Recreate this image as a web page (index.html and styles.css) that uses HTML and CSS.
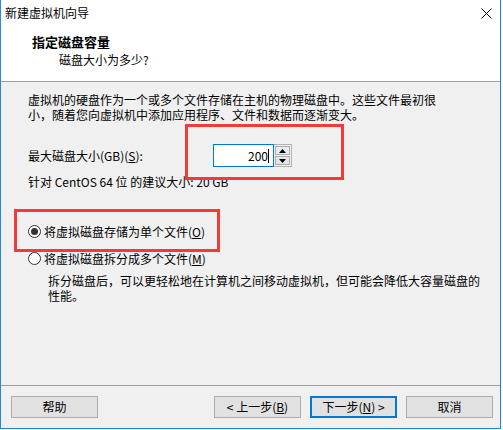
FILE: index.html
```html
<!DOCTYPE html>
<html lang="zh-CN">
<head>
<meta charset="utf-8">
<title>新建虚拟机向导</title>
<link rel="stylesheet" href="styles.css">
</head>
<body>
<div class="window">
  <div class="top">
    <div class="titlebar">
      <span class="title">新建虚拟机向导</span>
      <svg class="close" width="11" height="11" viewBox="0 0 11 11"><path d="M0.5 0.5 L10.5 10.5 M10.5 0.5 L0.5 10.5" stroke="#000" stroke-width="1" fill="none"/></svg>
    </div>
    <div class="header">
      <div class="h-title">指定磁盘容量</div>
      <div class="h-sub">磁盘大小为多少?</div>
    </div>
  </div>
  <div class="content">
    <p class="intro">虚拟机的硬盘作为一个或多个文件存储在主机的物理磁盘中。这些文件最初很<br>小，随着您向虚拟机中添加应用程序、文件和数据而逐渐变大。</p>
    <div class="size-row">
      <span class="size-label">最大磁盘大小(GB)(<u>S</u>):</span>
      <div class="spinbox">
        <div class="spin-input"><span>200</span><i class="caret"></i></div>
        <div class="spin-btns">
          <div class="spin-btn up"><svg width="7" height="4" viewBox="0 0 7 4"><path d="M0 4 L3.5 0 L7 4 Z" fill="#000"/></svg></div>
          <div class="spin-btn down"><svg width="7" height="4" viewBox="0 0 7 4"><path d="M0 0 L7 0 L3.5 4 Z" fill="#000"/></svg></div>
        </div>
      </div>
    </div>
    <p class="rec">针对 CentOS 64 位 的建议大小: 20 GB</p>
    <div class="radio-row first"><span class="radio checked"></span><span>将虚拟磁盘存储为单个文件(<u>O</u>)</span></div>
    <div class="radio-row second"><span class="radio"></span><span>将虚拟磁盘拆分成多个文件(<u>M</u>)</span></div>
    <p class="desc">拆分磁盘后，可以更轻松地在计算机之间移动虚拟机，但可能会降低大容量磁盘的<br>性能。</p>
    <div class="mark mark-size"></div>
    <div class="mark mark-radio"></div>
  </div>
  <div class="footer">
    <button class="btn">帮助</button>
    <div class="spacer"></div>
    <button class="btn">&lt; 上一步(<u>B</u>)</button>
    <button class="btn default">下一步(<u>N</u>) &gt;</button>
    <button class="btn">取消</button>
  </div>
</div>
</body>
</html>
```
FILE: styles.css
```css
* { box-sizing: border-box; }
html, body { margin: 0; padding: 0; background: #fff; }
body {
  font-family: "Noto Sans CJK SC", "Microsoft YaHei", sans-serif;
  font-size: 12px;
  color: #000;
}
.window {
  width: 501px;
  height: 429px;
  display: flex;
  flex-direction: column;
  border-left: 1px solid #2b8ad8;
  border-right: 1px solid #1883d7;
  border-bottom: 1px solid #1883d7;
  background: #f0f0f0;
}
.top {
  background: #fff;
  height: 82px;
  border-bottom: 1px solid #a0a0a0;
  flex: none;
}
.titlebar {
  height: 26px;
  display: flex;
  align-items: center;
  justify-content: space-between;
  padding-left: 4px;
  padding-right: 8px;
}
.title { line-height: 16px; }
.close { display: block; margin-top: 0; }
.header {
  padding-left: 31px;
  padding-top: 7px;
}
.h-title {
  font-size: 13px;
  font-weight: bold;
  line-height: 18px;
}
.h-sub {
  line-height: 18px;
  margin-left: 27px;
}
.content {
  position: relative;
  flex: 1;
  padding: 10px 0 0 27px;
}
.intro, .rec, .desc {
  margin: 0;
  line-height: 15px;
  white-space: nowrap;
}
.size-row {
  margin-top: 22px;
  height: 23px;
  display: flex;
  align-items: center;
}
.size-label { width: 185px; line-height: 15px; }
.spinbox { display: flex; height: 23px; }
.spin-input {
  width: 61px;
  height: 23px;
  border: 1px solid #0078d7;
  background: #fff;
  display: flex;
  align-items: center;
  justify-content: flex-end;
  padding-right: 4px;
  font-size: 12px;
}
.caret {
  display: inline-block;
  width: 1px;
  height: 14px;
  background: #000;
  margin-left: 0;
}
.spin-btns {
  width: 18px;
  height: 23px;
  border: 1px solid #b4b4b4;
  border-left: none;
  display: flex;
  flex-direction: column;
  gap: 1px;
  padding: 1px 1px 1px 1px;
  background: #f0f0f0;
}
.spin-btn {
  flex: 1;
  border: 1px solid #adadad;
  display: flex;
  align-items: center;
  justify-content: center;
}
.spin-btn.up { background: #e3edf7; }
.spin-btn.down { background: #e5e5e5; }
.spin-btn svg { display: block; }
.rec { margin-top: 7px; }
.radio-row {
  display: flex;
  align-items: center;
  height: 15px;
  line-height: 15px;
  gap: 3px;
}
.radio-row.first { margin-top: 35px; }
.radio-row.second { margin-top: 12px; }
.radio {
  width: 13px;
  height: 13px;
  border: 1px solid #333;
  border-radius: 50%;
  background: #fff;
  display: flex;
  align-items: center;
  justify-content: center;
  flex: none;
}
.radio.checked::after {
  content: "";
  width: 7px;
  height: 7px;
  border-radius: 50%;
  background: #333;
}
.desc { margin-top: 7px; margin-left: 20px; }
.mark {
  position: absolute;
  border: 3px solid #f23a3a;
}
.mark-size { left: 184px; top: 42px; width: 159px; height: 56px; }
.mark-radio { left: 13px; top: 127px; width: 206px; height: 43px; }
.footer {
  flex: none;
  height: 43px;
  border-top: 1px solid #a0a0a0;
  display: flex;
  align-items: flex-start;
  padding: 10px 7px 0 10px;
  gap: 9px;
}
.spacer { flex: 1; }
.btn {
  width: 87px;
  height: 22px;
  border: 1px solid #adadad;
  background: #e1e1e1;
  font-family: "Noto Sans CJK SC", "Microsoft YaHei", sans-serif;
  font-size: 12px;
  color: #000;
  padding: 0;
  line-height: 18px;
}
.btn.default { border: 2px solid #0078d7; }
```
